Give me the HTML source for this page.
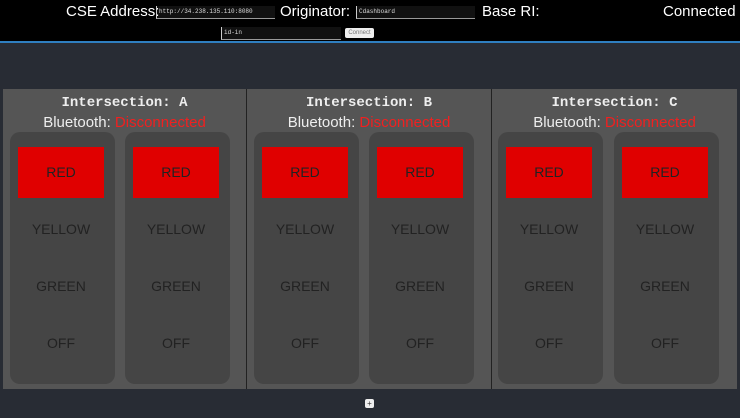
<html><head><style>
body{margin:0;width:740px;height:418px;background:#282c34;font-family:"Liberation Sans",sans-serif;position:relative;overflow:hidden}
.hdr{position:absolute;left:0;top:0;width:740px;height:41px;background:#000;border-bottom:2px solid #2f7fc0;color:#fff}
.t{position:absolute;font-size:15px;top:3px;white-space:nowrap}
.in{position:absolute;height:12px;border-bottom:1px solid #999;background:#fff1;font:6px "Liberation Mono",monospace;color:#ddd;border-left:1px solid #ccc;padding-left:2px;line-height:12px}
.sec{position:absolute;top:89px;height:300px;background:#555;border-right:1px solid #222}
.h1{position:absolute;width:100%;text-align:center;top:6px;font:bold 14px "Liberation Mono",monospace;color:#eee}
.h2{position:absolute;width:100%;text-align:center;top:25px;font-size:15px;color:#eee}
.h2 span{color:#f02020}
.col{position:absolute;top:43px;width:105px;height:252px;background:#454545;border-radius:10px}
.l{position:absolute;left:8px;width:86px;height:51px;text-align:center;line-height:51px;font-size:14px;color:#222}
.r{background:#e00000;top:15px}
</style></head><body>
<div class="hdr">
<div class="t" style="left:66px">CSE Address:</div>
<div class="in" style="left:156px;top:6px;width:116px">http://34.238.135.110:8080</div>
<div class="t" style="left:280px">Originator:</div>
<div class="in" style="left:356px;top:6px;width:116px">Cdashboard</div>
<div class="t" style="left:482px">Base RI:</div>
<div class="t" style="left:663px">Connected</div>
<div class="in" style="left:221px;top:27px;width:117px">id-in</div>
<div style="position:absolute;left:345px;top:28px;width:29px;height:10px;background:#eee;border-radius:2px;font-size:6px;color:#777;text-align:center;line-height:10px">Connect</div>
</div>
<div class="sec" style="left:3px;width:243px"><div class="h1">Intersection: A</div><div class="h2">Bluetooth: <span>Disconnected</span></div>
<div class="col" style="left:7px"><div class="l r">RED</div><div class="l" style="top:72px">YELLOW</div><div class="l" style="top:129px">GREEN</div><div class="l" style="top:186px">OFF</div></div>
<div class="col" style="left:122px"><div class="l r">RED</div><div class="l" style="top:72px">YELLOW</div><div class="l" style="top:129px">GREEN</div><div class="l" style="top:186px">OFF</div></div></div>
<div class="sec" style="left:247px;width:244px"><div class="h1">Intersection: B</div><div class="h2">Bluetooth: <span>Disconnected</span></div>
<div class="col" style="left:7px"><div class="l r">RED</div><div class="l" style="top:72px">YELLOW</div><div class="l" style="top:129px">GREEN</div><div class="l" style="top:186px">OFF</div></div>
<div class="col" style="left:122px"><div class="l r">RED</div><div class="l" style="top:72px">YELLOW</div><div class="l" style="top:129px">GREEN</div><div class="l" style="top:186px">OFF</div></div></div>
<div class="sec" style="left:492px;width:245px;border-right:none"><div class="h1">Intersection: C</div><div class="h2">Bluetooth: <span>Disconnected</span></div>
<div class="col" style="left:6px"><div class="l r">RED</div><div class="l" style="top:72px">YELLOW</div><div class="l" style="top:129px">GREEN</div><div class="l" style="top:186px">OFF</div></div>
<div class="col" style="left:122px"><div class="l r">RED</div><div class="l" style="top:72px">YELLOW</div><div class="l" style="top:129px">GREEN</div><div class="l" style="top:186px">OFF</div></div></div>
<div style="position:absolute;left:365px;top:399px;width:9px;height:9px;background:#eee;border-radius:2px;font-size:8px;line-height:9px;text-align:center;color:#333">+</div>
</body></html>
